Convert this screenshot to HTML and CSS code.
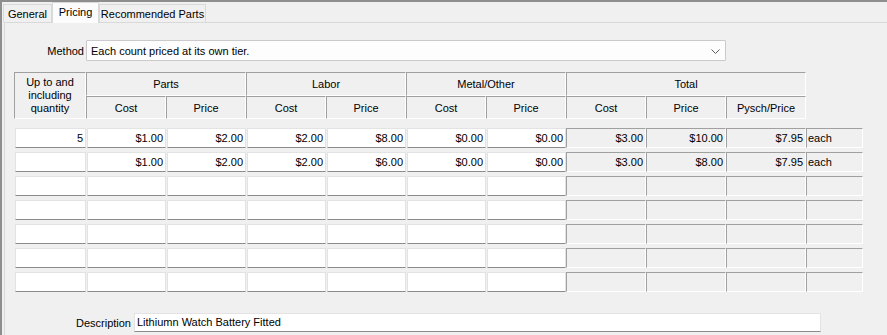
FILE: index.html
```html
<!DOCTYPE html>
<html>
<head>
<meta charset="utf-8">
<link rel="stylesheet" href="styles.css">
</head>
<body>
<div class="window">
  <div class="tabs">
    <div class="tab tab-general">General</div>
    <div class="tab tab-active">Pricing</div>
    <div class="tab tab-parts">Recommended Parts</div>
  </div>
  <div class="panel">
    <div class="method-row">
      <span class="lbl method-lbl">Method</span>
      <div class="select">
        <span class="select-text">Each count priced at its own tier.</span>
        <svg class="chev" width="9" height="5" viewBox="0 0 9 5"><path d="M0.5 0.5 L4.5 4.5 L8.5 0.5" fill="none" stroke="#5a5a5a" stroke-width="1"/></svg>
      </div>
    </div>

    <div class="head">
      <div class="hc h-qty">Up to and<br>including<br>quantity</div>
      <div class="hc span2">Parts</div>
      <div class="hc span2">Labor</div>
      <div class="hc span2">Metal/Other</div>
      <div class="hc span3">Total</div>
      <div class="hc">Cost</div>
      <div class="hc">Price</div>
      <div class="hc">Cost</div>
      <div class="hc">Price</div>
      <div class="hc">Cost</div>
      <div class="hc">Price</div>
      <div class="hc">Cost</div>
      <div class="hc">Price</div>
      <div class="hc">Pysch/Price</div>
    </div>

    <div class="rows">
      <div class="row">
        <div class="in">5</div><div class="in">$1.00</div><div class="in">$2.00</div><div class="in">$2.00</div><div class="in">$8.00</div><div class="in">$0.00</div><div class="in">$0.00</div>
        <div class="ro">$3.00</div><div class="ro">$10.00</div><div class="ro">$7.95</div><div class="ro each">each</div>
      </div>
      <div class="row">
        <div class="in"></div><div class="in">$1.00</div><div class="in">$2.00</div><div class="in">$2.00</div><div class="in">$6.00</div><div class="in">$0.00</div><div class="in">$0.00</div>
        <div class="ro">$3.00</div><div class="ro">$8.00</div><div class="ro">$7.95</div><div class="ro each">each</div>
      </div>
      <div class="row">
        <div class="in"></div><div class="in"></div><div class="in"></div><div class="in"></div><div class="in"></div><div class="in"></div><div class="in"></div>
        <div class="ro"></div><div class="ro"></div><div class="ro"></div><div class="ro each"></div>
      </div>
      <div class="row">
        <div class="in"></div><div class="in"></div><div class="in"></div><div class="in"></div><div class="in"></div><div class="in"></div><div class="in"></div>
        <div class="ro"></div><div class="ro"></div><div class="ro"></div><div class="ro each"></div>
      </div>
      <div class="row">
        <div class="in"></div><div class="in"></div><div class="in"></div><div class="in"></div><div class="in"></div><div class="in"></div><div class="in"></div>
        <div class="ro"></div><div class="ro"></div><div class="ro"></div><div class="ro each"></div>
      </div>
      <div class="row">
        <div class="in"></div><div class="in"></div><div class="in"></div><div class="in"></div><div class="in"></div><div class="in"></div><div class="in"></div>
        <div class="ro"></div><div class="ro"></div><div class="ro"></div><div class="ro each"></div>
      </div>
      <div class="row">
        <div class="in"></div><div class="in"></div><div class="in"></div><div class="in"></div><div class="in"></div><div class="in"></div><div class="in"></div>
        <div class="ro"></div><div class="ro"></div><div class="ro"></div><div class="ro each"></div>
      </div>
    </div>

    <div class="desc-row">
      <span class="lbl desc-lbl">Description</span>
      <div class="desc-input">Lithiumn Watch Battery Fitted</div>
    </div>
  </div>
</div>
</body>
</html>
```

FILE: styles.css
```css
* { box-sizing: border-box; }
html, body {
  margin: 0;
  padding: 0;
  background: #f0f0f0;
}
body {
  font-family: "Liberation Sans", Arial, sans-serif;
  font-size: 11px;
  color: #000;
}
.window {
  width: 887px;
  height: 335px;
  overflow: hidden;
  border-top: 2px solid #8e8e8e;
  border-left: 2px solid #8e8e8e;
  background: #f0f0f0;
}
.tabs {
  display: flex;
  align-items: flex-end;
  height: 20px;
  padding-left: 1px;
  position: relative;
  z-index: 2;
}
.tab {
  height: 18px;
  border: 1px solid #d9d9d9;
  border-bottom: none;
  background: #f0f0f0;
  display: flex;
  align-items: center;
  justify-content: center;
  white-space: nowrap;
}
.tab-general { width: 49px; }
.tab-active {
  width: 47px;
  height: 21px;
  margin-bottom: -1px;
  background: #fcfcfc;
  padding-bottom: 3px;
}
.tab-parts { width: 107px; }
.panel {
  margin-left: 2px;
  height: 320px;
  border-top: 1px solid #d9d9d9;
  border-left: 1px solid #d9d9d9;
  background: #f0f0f0;
}
.method-row {
  display: flex;
  align-items: center;
  margin-top: 17px;
  height: 21px;
}
.lbl {
  text-align: right;
  white-space: nowrap;
}
.method-lbl {
  width: 79px;
  margin-right: 2px;
}
.select {
  width: 640px;
  height: 21px;
  background: #fdfdfd;
  border: 1px solid #cacaca;
  border-radius: 1px;
  display: flex;
  align-items: center;
  justify-content: space-between;
  padding: 0 5px 0 4px;
}
.chev { display: block; margin-top: 1px; }

.head {
  display: grid;
  grid-template-columns: 72px repeat(9, 80px);
  grid-template-rows: 24px 23px;
  margin-top: 11px;
  margin-left: 9px;
  width: 792px;
}
.hc {
  border-top: 1px solid #a0a0a0;
  border-left: 1px solid #a0a0a0;
  border-right: 1px solid #ffffff;
  border-bottom: 1px solid #ffffff;
  display: flex;
  align-items: center;
  justify-content: center;
  text-align: center;
  white-space: nowrap;
}
.h-qty {
  grid-row: 1 / 3;
  line-height: 13px;
  padding-bottom: 1px;
}
.span2 { grid-column: span 2; }
.span3 { grid-column: span 3; }

.rows {
  margin-top: 9px;
  margin-left: 9px;
  display: flex;
  flex-direction: column;
  gap: 4px;
}
.row {
  display: grid;
  grid-template-columns: 72px repeat(9, 80px) 57px;
  height: 20px;
}
.in {
  margin-left: 1px;
  background: #ffffff;
  border: 1px solid #e3e3e3;
  border-bottom: 1px solid #8c8c8c;
  text-align: right;
  padding-right: 2px;
  line-height: 18px;
  white-space: nowrap;
}
.ro {
  background: #f0f0f0;
  border-top: 1px solid #a0a0a0;
  border-left: 1px solid #a0a0a0;
  border-right: 1px solid #ffffff;
  border-bottom: 1px solid #ffffff;
  text-align: right;
  padding-right: 2px;
  line-height: 18px;
  white-space: nowrap;
}
.ro.each {
  text-align: left;
  padding-left: 1px;
}

.desc-row {
  display: flex;
  align-items: center;
  margin-top: 21px;
  height: 19px;
}
.desc-lbl {
  width: 126px;
  margin-right: 3px;
}
.desc-input {
  width: 687px;
  height: 19px;
  background: #ffffff;
  border: 1px solid #e3e3e3;
  border-bottom: 1px solid #8c8c8c;
  padding-left: 2px;
  line-height: 17px;
  white-space: nowrap;
}
```
